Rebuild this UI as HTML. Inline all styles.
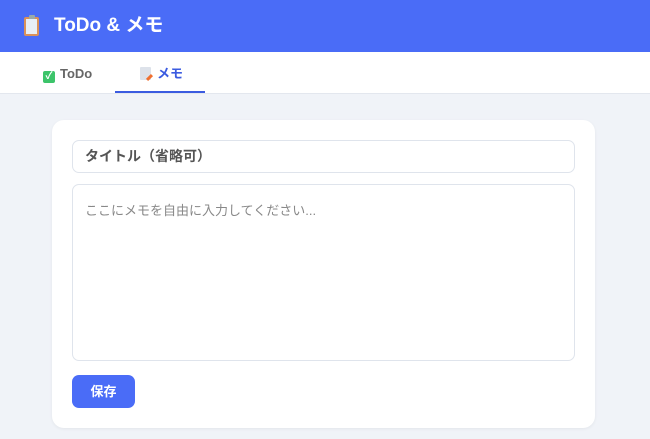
<!DOCTYPE html>
<html><head><meta charset="utf-8"><style>
*{box-sizing:border-box;margin:0;padding:0}
body{width:650px;height:439px;overflow:hidden;background:#f0f3f8;font-family:"Liberation Sans","Noto Sans CJK JP",sans-serif}
.hd{position:absolute;left:0;top:0;width:650px;height:52px;background:#4a6cf7;color:#fff}
.hd .ic{position:absolute;left:24px;top:17px;width:15px;height:19px;background:#e8eef5;border:2px solid #d9915a;border-radius:2px}
.hd .ic:before{content:"";position:absolute;left:3px;top:-4px;width:6px;height:4px;background:#9aa;border-radius:1px}
.hd .t{position:absolute;left:54px;top:14px;font-size:19px;font-weight:bold;line-height:24px}
.tabs{position:absolute;left:0;top:52px;width:650px;height:42px;background:#fff;border-bottom:1px solid #e3e7ee}
.tab{position:absolute;top:14px;font-size:13px;font-weight:bold;line-height:16px;color:#666}
.tab.a{color:#3b5be0}
.chk{display:inline-block;width:12px;height:12px;background:#3cc46a;border-radius:2px;vertical-align:-1px;margin-right:5px;color:#fff;font-size:10px;line-height:12px;text-align:center}
.memo{display:inline-block;width:11px;height:13px;background:#dde2ea;border-radius:1px;vertical-align:-2px;margin-right:6px;position:relative}
.memo:after{content:"";position:absolute;right:-2px;bottom:1px;width:7px;height:3px;background:#f07030;transform:rotate(-45deg)}
.ul{position:absolute;left:115px;top:39px;width:90px;height:2px;background:#3b5be0}
.card{position:absolute;left:52px;top:120px;width:543px;height:308px;background:#fff;border-radius:12px;box-shadow:0 1px 3px rgba(0,0,0,.06)}
.in{position:absolute;left:20px;top:20px;width:503px;height:33px;border:1px solid #dfe4ec;border-radius:7px;font-size:14px;font-weight:bold;color:#555;padding-left:12px;line-height:31px}
.ta{position:absolute;left:20px;top:64px;width:503px;height:177px;border:1px solid #dfe4ec;border-radius:7px;font-size:13px;color:#888;padding:15px 12px}
.btn{position:absolute;left:20px;top:255px;width:63px;height:33px;background:#4a6cf7;border-radius:7px;color:#fff;font-size:13px;font-weight:bold;text-align:center;line-height:33px}
</style></head><body>
<div class="hd"><div class="ic"></div><div class="t">ToDo &amp; メモ</div></div>
<div class="tabs">
<div class="tab" style="left:43px"><span class="chk">✓</span>ToDo</div>
<div class="tab a" style="left:140px"><span class="memo"></span>メモ</div>
<div class="ul"></div>
</div>
<div class="card">
<div class="in">タイトル（省略可）</div>
<div class="ta">ここにメモを自由に入力してください...</div>
<div class="btn">保存</div>
</div>
</body></html>
